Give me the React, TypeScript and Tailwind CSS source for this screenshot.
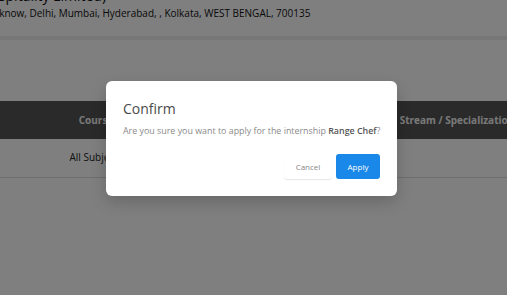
import React from 'react';

const font = { fontFamily: '"Open Sans", "Noto Sans", sans-serif' };

const ConfirmDialog: React.FC<{ title: string; internship: string }> = ({ title, internship }) => (
    <div className="w-[291px] rounded-[6px] bg-white px-[17px] pt-[18px] pb-[17px] shadow-[0_6px_16px_rgba(0,0,0,0.18)]">
        <h2 className="text-[14px] leading-[20px] text-[#4a4a4a]">{title}</h2>
        <p className="mt-[6px] text-[8.9px] leading-[12px] text-[#8a8a8a] whitespace-nowrap">
            Are you sure you want to apply for the internship <b className="font-semibold text-[#555]">{internship}</b>?
        </p>
        <div className="mt-[17px] flex justify-end gap-[4px]">
            <button className="h-[25px] w-[48px] rounded-[3px] bg-white text-[8px] text-[#888] shadow-[0_1px_1px_rgba(0,0,0,0.1)]">Cancel</button>
            <button className="h-[25px] w-[44px] rounded-[3px] bg-[#1a88e8] text-[8px] text-white">Apply</button>
        </div>
    </div>
);

export default function App() {
    return (
        <div className="relative h-[295px] w-[507px] overflow-hidden bg-white" style={font}>
            {/* company address, page is scrolled a little to the right */}
            <div className="-mt-[13px] -ml-[17px] text-[#111] whitespace-nowrap">
                <div className="-ml-[7px] text-[14px] leading-[18px]">(Hospitality Limited)</div>
                <div className="mt-[1px] text-[10px] leading-[14px]">Lucknow, Delhi, Mumbai, Hyderabad, , Kolkata, WEST BENGAL, 700135</div>
            </div>
            <div className="mt-[16px] h-[4px] bg-[#eeeeee]" />

            <table className="mt-[61px] w-[600px] table-fixed border-collapse text-[10px]">
                <thead>
                    <tr className="h-[38px] bg-[#555] text-[#f2f2f2] font-semibold">
                        <th className="w-[192px] text-center">Course</th>
                        <th className="w-[150px]"></th>
                        <th className="w-[230px] text-center">Stream / Specialization</th>
                        <th></th>
                    </tr>
                </thead>
                <tbody>
                    <tr className="h-[38px] border-b border-[#ddd] text-[#222]">
                        <td className="text-center">All Subjects</td>
                        <td></td>
                        <td></td>
                        <td></td>
                    </tr>
                </tbody>
            </table>

            <div className="absolute inset-0 bg-black/50" />
            <div className="absolute left-[106px] top-[81px]">
                <ConfirmDialog title="Confirm" internship="Range Chef" />
            </div>
        </div>
    );
}
